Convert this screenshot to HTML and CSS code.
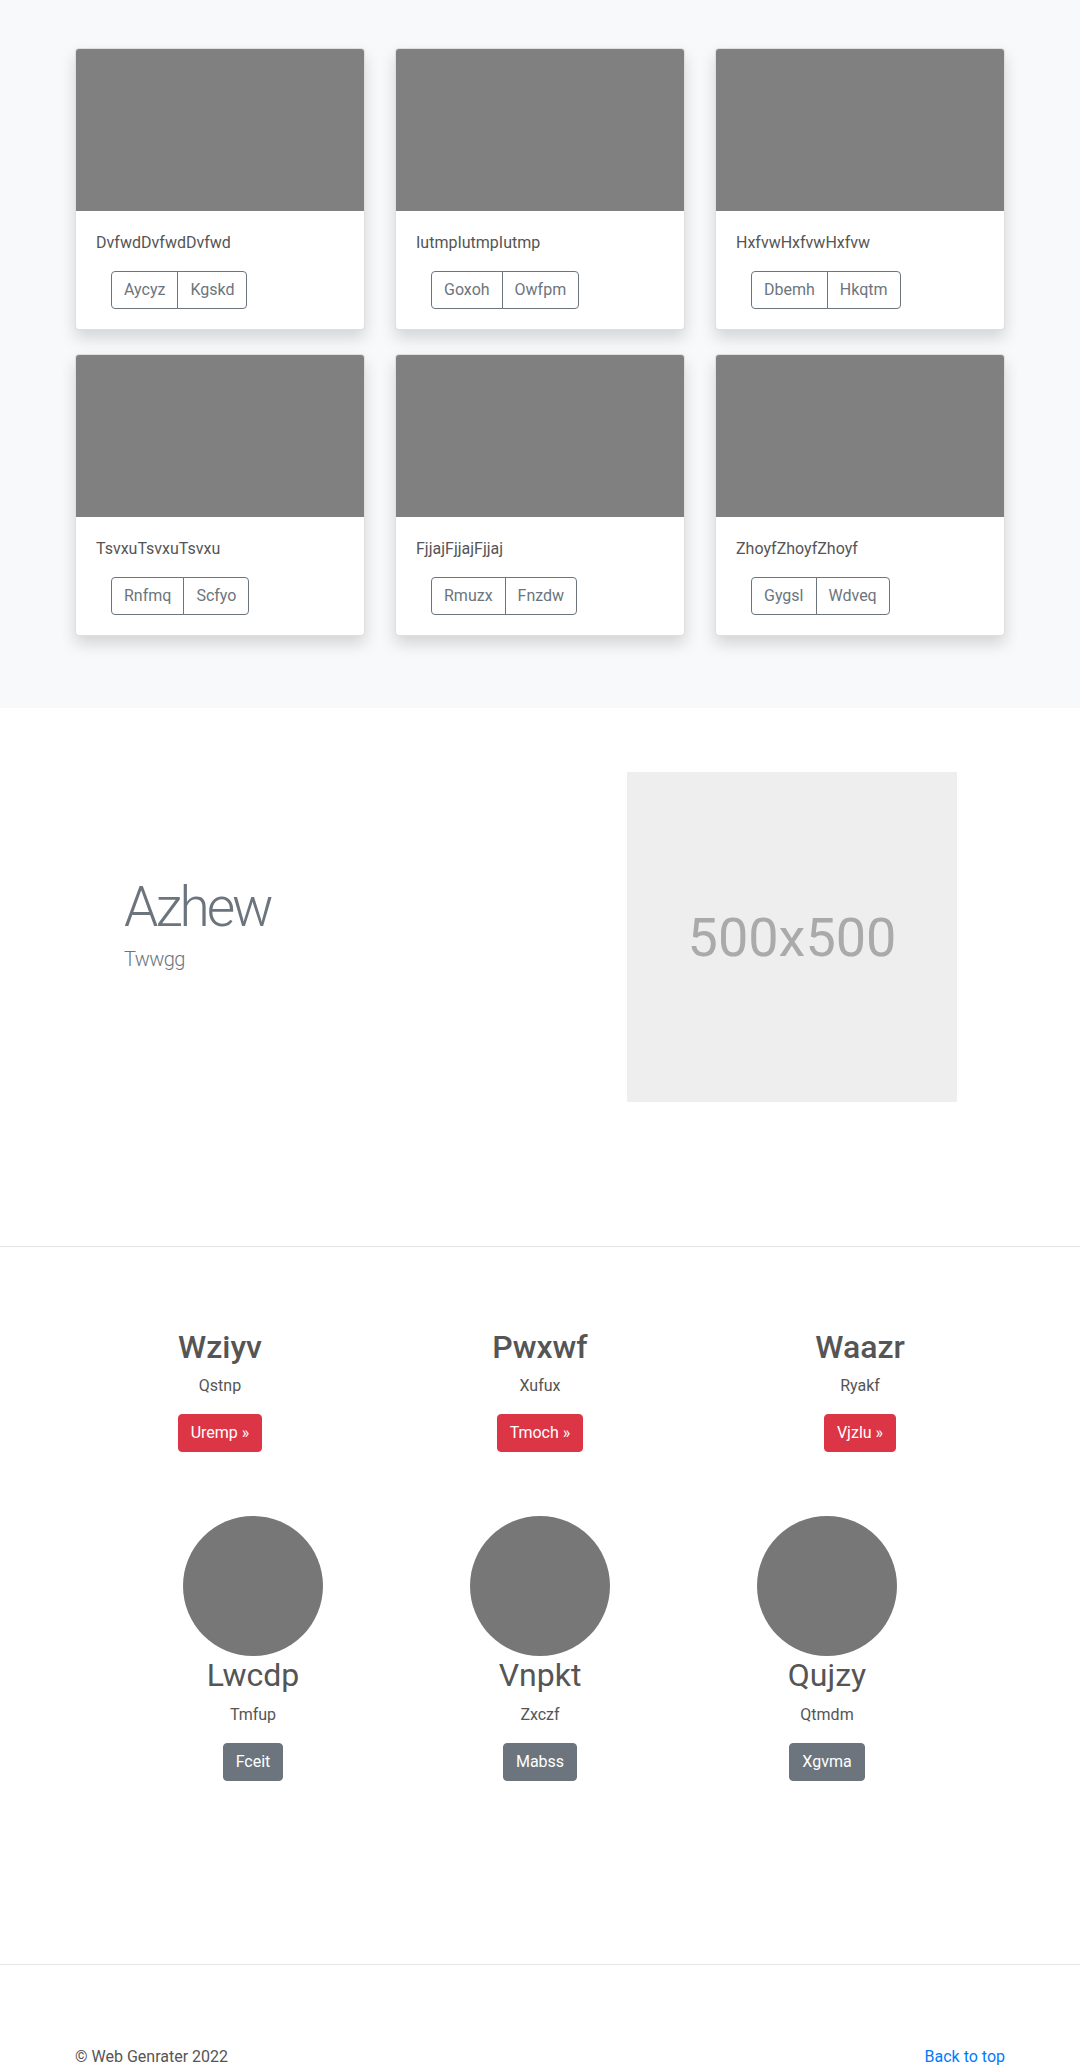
FILE: index.html
```html
<!DOCTYPE html>
<html lang="en">
<head>
  <meta charset="UTF-8">
  <meta name="viewport" content="width=device-width, initial-scale=1">
  <title>Web Genrater</title>
  <link rel="stylesheet" href="styles.css">
</head>
<body>
  <section class="album">
    <div class="container">
      <div class="card-grid">
        <div class="card">
          <div class="card-img"></div>
          <div class="card-body">
            <p class="card-text">DvfwdDvfwdDvfwd</p>
            <div class="btn-group"><a class="btn btn-outline">Aycyz</a><a class="btn btn-outline">Kgskd</a></div>
          </div>
        </div>
        <div class="card">
          <div class="card-img"></div>
          <div class="card-body">
            <p class="card-text">IutmpIutmpIutmp</p>
            <div class="btn-group"><a class="btn btn-outline">Goxoh</a><a class="btn btn-outline">Owfpm</a></div>
          </div>
        </div>
        <div class="card">
          <div class="card-img"></div>
          <div class="card-body">
            <p class="card-text">HxfvwHxfvwHxfvw</p>
            <div class="btn-group"><a class="btn btn-outline">Dbemh</a><a class="btn btn-outline">Hkqtm</a></div>
          </div>
        </div>
        <div class="card">
          <div class="card-img"></div>
          <div class="card-body">
            <p class="card-text">TsvxuTsvxuTsvxu</p>
            <div class="btn-group"><a class="btn btn-outline">Rnfmq</a><a class="btn btn-outline">Scfyo</a></div>
          </div>
        </div>
        <div class="card">
          <div class="card-img"></div>
          <div class="card-body">
            <p class="card-text">FjjajFjjajFjjaj</p>
            <div class="btn-group"><a class="btn btn-outline">Rmuzx</a><a class="btn btn-outline">Fnzdw</a></div>
          </div>
        </div>
        <div class="card">
          <div class="card-img"></div>
          <div class="card-body">
            <p class="card-text">ZhoyfZhoyfZhoyf</p>
            <div class="btn-group"><a class="btn btn-outline">Gygsl</a><a class="btn btn-outline">Wdveq</a></div>
          </div>
        </div>
      </div>
    </div>
  </section>

  <section class="feature">
    <div class="container feature-inner">
      <div class="feature-text">
        <h1 class="display">Azhew</h1>
        <p class="lead">Twwgg</p>
      </div>
      <div class="placeholder">500x500</div>
    </div>
  </section>

  <hr class="divider">

  <section class="marketing">
    <div class="container">
      <div class="trio">
        <div class="col">
          <h2>Wziyv</h2>
          <p>Qstnp</p>
          <a class="btn btn-danger">Uremp &raquo;</a>
        </div>
        <div class="col">
          <h2>Pwxwf</h2>
          <p>Xufux</p>
          <a class="btn btn-danger">Tmoch &raquo;</a>
        </div>
        <div class="col">
          <h2>Waazr</h2>
          <p>Ryakf</p>
          <a class="btn btn-danger">Vjzlu &raquo;</a>
        </div>
      </div>
      <div class="team">
        <div class="col">
          <div class="avatar"></div>
          <h2>Lwcdp</h2>
          <p>Tmfup</p>
          <a class="btn btn-secondary">Fceit</a>
        </div>
        <div class="col">
          <div class="avatar"></div>
          <h2>Vnpkt</h2>
          <p>Zxczf</p>
          <a class="btn btn-secondary">Mabss</a>
        </div>
        <div class="col">
          <div class="avatar"></div>
          <h2>Qujzy</h2>
          <p>Qtmdm</p>
          <a class="btn btn-secondary">Xgvma</a>
        </div>
      </div>
    </div>
  </section>

  <hr class="divider">

  <footer class="container footer">
    <p>&copy; Web Genrater 2022</p>
    <a href="#">Back to top</a>
  </footer>
</body>
</html>
```

FILE: styles.css
```css
* { box-sizing: border-box; }
body { margin: 0; font-family: Roboto, "Open Sans", sans-serif; font-size: 16px; line-height: 1.5; color: #555; background: #fff; }
p { margin: 0; }
a { text-decoration: none; }
.container { width: 960px; margin: 0 auto; padding: 0 15px; }

/* album */
.album { background: #f8f9fa; padding: 48px 0; }
.card-grid { display: grid; grid-template-columns: repeat(3, 290px); column-gap: 30px; row-gap: 24px; padding-bottom: 24px; }
.card { background: #fff; border: 1px solid rgba(0,0,0,0.125); border-radius: 4px; overflow: hidden;
        box-shadow: 0 8px 16px rgba(0,0,0,0.15); }
.card-img { height: 162px; background: #808080; }
.card-body { padding: 20px; }
.card-text { margin-bottom: 16px; }
.btn-group { display: inline-flex; margin-left: 15px; }
.btn { display: inline-block; font-size: 16px; line-height: 24px; padding: 6px 12px; border: 1px solid transparent; border-radius: 4px; text-align: center; }
.btn-outline { color: #6c757d; border-color: #6c757d; }
.btn-group .btn:first-child { border-radius: 4px 0 0 4px; }
.btn-group .btn:last-child { border-radius: 0 4px 4px 0; margin-left: -1px; }

/* feature */
.feature { padding: 64px 0 144px; }
.feature-inner { display: flex; align-items: center; }
.feature-text { flex: 1; padding-left: 49px; }
.display { font-size: 55px; font-weight: 300; line-height: 1.2; letter-spacing: -3px; color: #6c757d; margin: 0 0 4px; }
.lead { font-size: 20px; font-weight: 300; letter-spacing: -0.6px; color: #6c757d; margin-bottom: 27px; }
.placeholder { width: 330px; height: 330px; margin-right: 48px; background: #eee; color: #aaa;
               font-size: 54px; display: flex; align-items: center; justify-content: center; }

.divider { margin: 0; border: 0; border-top: 1px solid #e5e5e5; }

/* marketing */
.marketing { padding: 81px 0 183px; text-align: center; }
.marketing h2 { font-size: 32px; font-weight: 500; line-height: 1.2; margin: 0 0 8px; }
.marketing p { margin-bottom: 16px; }
.trio { display: grid; grid-template-columns: repeat(3, 1fr); margin: 0 -15px 64px; }
.team { display: grid; grid-template-columns: repeat(3, 287px); justify-content: center; }
.team h2 { font-weight: 400; }
.avatar { width: 140px; height: 140px; border-radius: 50%; background: #777; margin: 0 auto; }
.btn-danger { color: #fff; background: #dc3545; border-color: #dc3545; }
.btn-secondary { color: #fff; background: #6c757d; border-color: #6c757d; }

/* footer */
.footer { display: flex; justify-content: space-between; padding-top: 80px; }
.footer a { color: #007bff; }
```
